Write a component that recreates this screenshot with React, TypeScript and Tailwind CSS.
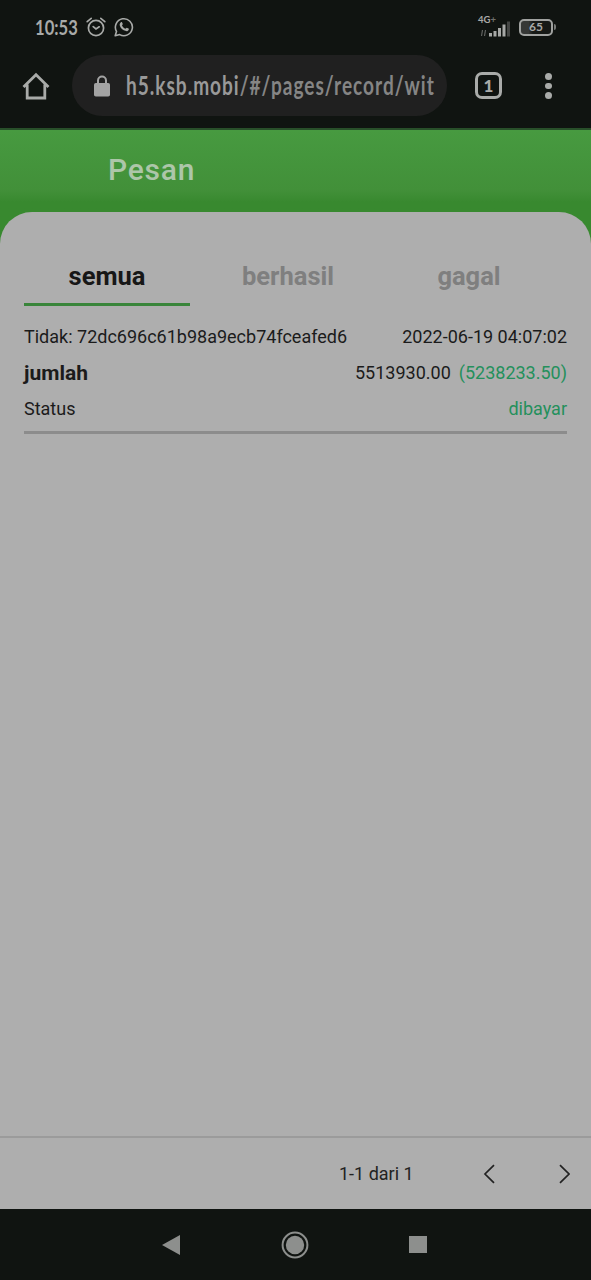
import { useState } from 'react';

interface WithdrawRecord {
  id: string;
  date: string;
  amount: string;
  received: string;
  status: string;
}

const tabs = ['semua', 'berhasil', 'gagal'];

const records: WithdrawRecord[] = [
  {
    id: '72dc696c61b98a9ecb74fceafed6',
    date: '2022-06-19 04:07:02',
    amount: '5513930.00',
    received: '(5238233.50)',
    status: 'dibayar',
  },
];

function AlarmIcon() {
  return (
    <svg className="h-5 w-5" viewBox="0 0 20 20" fill="none" stroke="currentColor" strokeWidth="1.7" strokeLinecap="round">
      <circle cx="10" cy="11" r="7.6" />
      <path d="M1.2 4.6 5.2 1.4M14.8 1.4l4 3.2M7.2 9.6 10 12l3.2-2.2" />
    </svg>
  );
}

function WhatsappIcon() {
  return (
    <svg className="h-5 w-5" viewBox="0 0 20 20">
      <path
        d="M1.2 18.8 2.5 14.4A8.5 8.5 0 1 1 5.7 17.6Z"
        fill="none"
        stroke="currentColor"
        strokeWidth="1.6"
        strokeLinejoin="round"
      />
      <path
        d="M6.9 5.3c.5-.4 1-.3 1.2.2l.7 1.6c.1.4-.7 1.1-.8 1.4.7 1.5 1.9 2.6 3.4 3.2.4-.1 1-1.1 1.4-1l1.7.8c.4.2.4.5.3.9-.4 1.3-1.5 1.9-2.7 1.7-3.3-.5-5.8-3-6.4-5.8-.2-1.1.2-2.2 1.2-3Z"
        fill="currentColor"
      />
    </svg>
  );
}

function SignalIcon() {
  return (
    <svg className="h-[22px] w-[33px]" viewBox="0 0 33 22">
      <path d="m2.5 20 1-6M5.5 20l1-6" stroke="#626462" strokeWidth="1.2" />
      <g fill="#a6a8a6">
        <rect x="10" y="17" width="3" height="3.5" />
        <rect x="14.5" y="15" width="3" height="5.5" />
        <rect x="19" y="12" width="3" height="8.5" />
        <rect x="23.5" y="8.5" width="3" height="12" />
      </g>
      <rect x="28" y="5.5" width="3" height="15" fill="#444644" />
    </svg>
  );
}

function StatusBar() {
  return (
    <div className="flex h-[54px] items-center justify-between pr-[35px] pl-[35px] text-[#a8aaa8]">
      <div className="flex items-center">
        <span className="w-[51px]">
          <span className="inline-block origin-left scale-x-[0.81] font-['Lato'] text-[20.5px] font-bold">10:53</span>
        </span>
        <AlarmIcon />
        <span className="ml-[8px] flex">
          <WhatsappIcon />
        </span>
      </div>
      <div className="flex items-center">
        <div className="relative flex">
          <span className="absolute -top-px -left-px font-['Lato'] text-[9.5px] leading-none font-bold">
            4G<span className="text-[#6e706e]">+</span>
          </span>
          <SignalIcon />
        </div>
        <div className="ml-[7px] flex items-center">
          <div className="flex h-[17px] w-[34px] items-center justify-center rounded-[5px] border-2 border-[#a0a2a0] bg-linear-to-r from-[#363836] from-25% to-[#161916] to-40% font-['Lato'] text-[12px] leading-none font-bold">
            65
          </div>
          <div className="ml-px h-[6px] w-[2px] rounded-r bg-[#777977]" />
        </div>
      </div>
    </div>
  );
}

function BrowserBar() {
  return (
    <div className="flex h-[74px] items-start pt-px text-[#a9aba9]">
      <svg className="mt-[17px] ml-[22px] h-7 w-7" viewBox="0 0 28 28" fill="none" stroke="currentColor" strokeWidth="2.8" strokeLinejoin="miter">
        <path d="M1.5 15 14 2.8 26.5 15M5.2 12.5V26h17.6V12.5" />
      </svg>
      <div className="ml-[22px] flex h-[61px] w-[375px] items-center overflow-hidden rounded-full bg-[#202020] pl-[22px]">
        <svg className="h-[22px] w-4 shrink-0" viewBox="0 0 16 22">
          <rect y="8" width="16" height="13.5" rx="1.8" fill="#a3a3a3" />
          <path d="M4 9V5.5a4 4 0 0 1 8 0V9" fill="none" stroke="#a3a3a3" strokeWidth="2" />
        </svg>
        <span className="ml-4 origin-left scale-x-[0.733] font-['Lato'] text-[26px] font-bold tracking-[1.35px] whitespace-nowrap text-[#999999]">
          h5.ksb.mobi<span className="text-[#858585]">/#/pages/record/wit</span>
        </span>
      </div>
      <div className="mt-[17px] ml-[28px] flex h-[27px] w-[27px] items-center justify-center rounded-[7px] border-[3px] border-[#a9aba9] font-['Lato'] text-[17px] leading-none font-black">
        1
      </div>
      <div className="mt-[18px] ml-[43px] flex flex-col gap-[3px]">
        <span className="h-[6.5px] w-[6.5px] rounded-full bg-[#a9aba9]" />
        <span className="h-[6.5px] w-[6.5px] rounded-full bg-[#a9aba9]" />
        <span className="h-[6.5px] w-[6.5px] rounded-full bg-[#a9aba9]" />
      </div>
    </div>
  );
}

function RecordItem({ record }: { record: WithdrawRecord }) {
  return (
    <div className="border-b-[3px] border-[#8c8c8c] pb-[4px] text-[18px] leading-9 text-[#1b1b1b]">
      <div className="flex justify-between">
        <span>Tidak: {record.id}</span>
        <span>{record.date}</span>
      </div>
      <div className="flex justify-between">
        <span className="text-[21px] font-bold">jumlah</span>
        <span>
          {record.amount}
          <span className="ml-2 text-[#24905c]">{record.received}</span>
        </span>
      </div>
      <div className="flex justify-between">
        <span>Status</span>
        <span className="text-[#24905c]">{record.status}</span>
      </div>
    </div>
  );
}

export default function App() {
  const [activeTab, setActiveTab] = useState('semua');

  return (
    <div className="flex h-[1280px] w-[591px] flex-col overflow-hidden bg-[#101411] font-['Roboto',sans-serif]">
      <StatusBar />
      <BrowserBar />

      <main className="flex h-[1081px] flex-col border-t-2 border-[#28502a] bg-linear-to-b from-[#479a40] via-[#429039] via-[60px] to-[#38892f] to-[72px]">
        <header className="flex h-[82px] shrink-0 items-center pb-1 pl-[108px]">
          <h1 className="text-[30px] font-medium tracking-[0.8px] text-[#adc6a9]">Pesan</h1>
        </header>

        <section className="flex flex-1 flex-col rounded-t-[32px] bg-[#aeaeae]">
          <nav className="flex px-6 pt-[34px]">
            {tabs.map((tab) => (
              <button
                key={tab}
                onClick={() => setActiveTab(tab)}
                className={
                  'mr-[15px] h-[60px] w-[166px] border-b-[3px] pt-[3px] text-[25.5px] font-bold ' +
                  (tab === activeTab ? 'border-[#39853a] text-[#171717]' : 'border-transparent text-[#7f7f7f]')
                }
              >
                {tab}
              </button>
            ))}
          </nav>

          <div className="flex-1 px-6 pt-[12.5px]">
            {records.map((record) => (
              <RecordItem key={record.id} record={record} />
            ))}
          </div>

          <footer className="flex h-[73px] items-center border-t-2 border-[#9b9b9b] pl-[339px] text-[18px] text-[#222222]">
            <span className="w-[144px]">1-1 dari 1</span>
            <button aria-label="prev">
              <svg className="h-5 w-3" viewBox="0 0 12 20" fill="none" stroke="currentColor" strokeWidth="1.7">
                <path d="M11 1.2 2 10l9 8.8" />
              </svg>
            </button>
            <button aria-label="next" className="ml-[63px]">
              <svg className="h-5 w-3" viewBox="0 0 12 20" fill="none" stroke="currentColor" strokeWidth="1.7">
                <path d="m2 1.2 9 8.8-9 8.8" />
              </svg>
            </button>
          </footer>
        </section>
      </main>

      <div className="flex h-[71px] items-center pl-[162px]">
        <svg className="h-5 w-[18px]" viewBox="0 0 18 20" fill="#8d8f8d">
          <path d="M0 10 18 0v20Z" />
        </svg>
        <svg className="ml-[101px] h-7 w-7" viewBox="0 0 28 28">
          <circle cx="14" cy="14" r="12.4" fill="none" stroke="#8d8f8d" strokeWidth="2" />
          <circle cx="14" cy="14" r="9.2" fill="#8d8f8d" />
        </svg>
        <span className="ml-[100px] h-[17px] w-[18px] bg-[#8d8f8d]" />
      </div>
    </div>
  );
}
